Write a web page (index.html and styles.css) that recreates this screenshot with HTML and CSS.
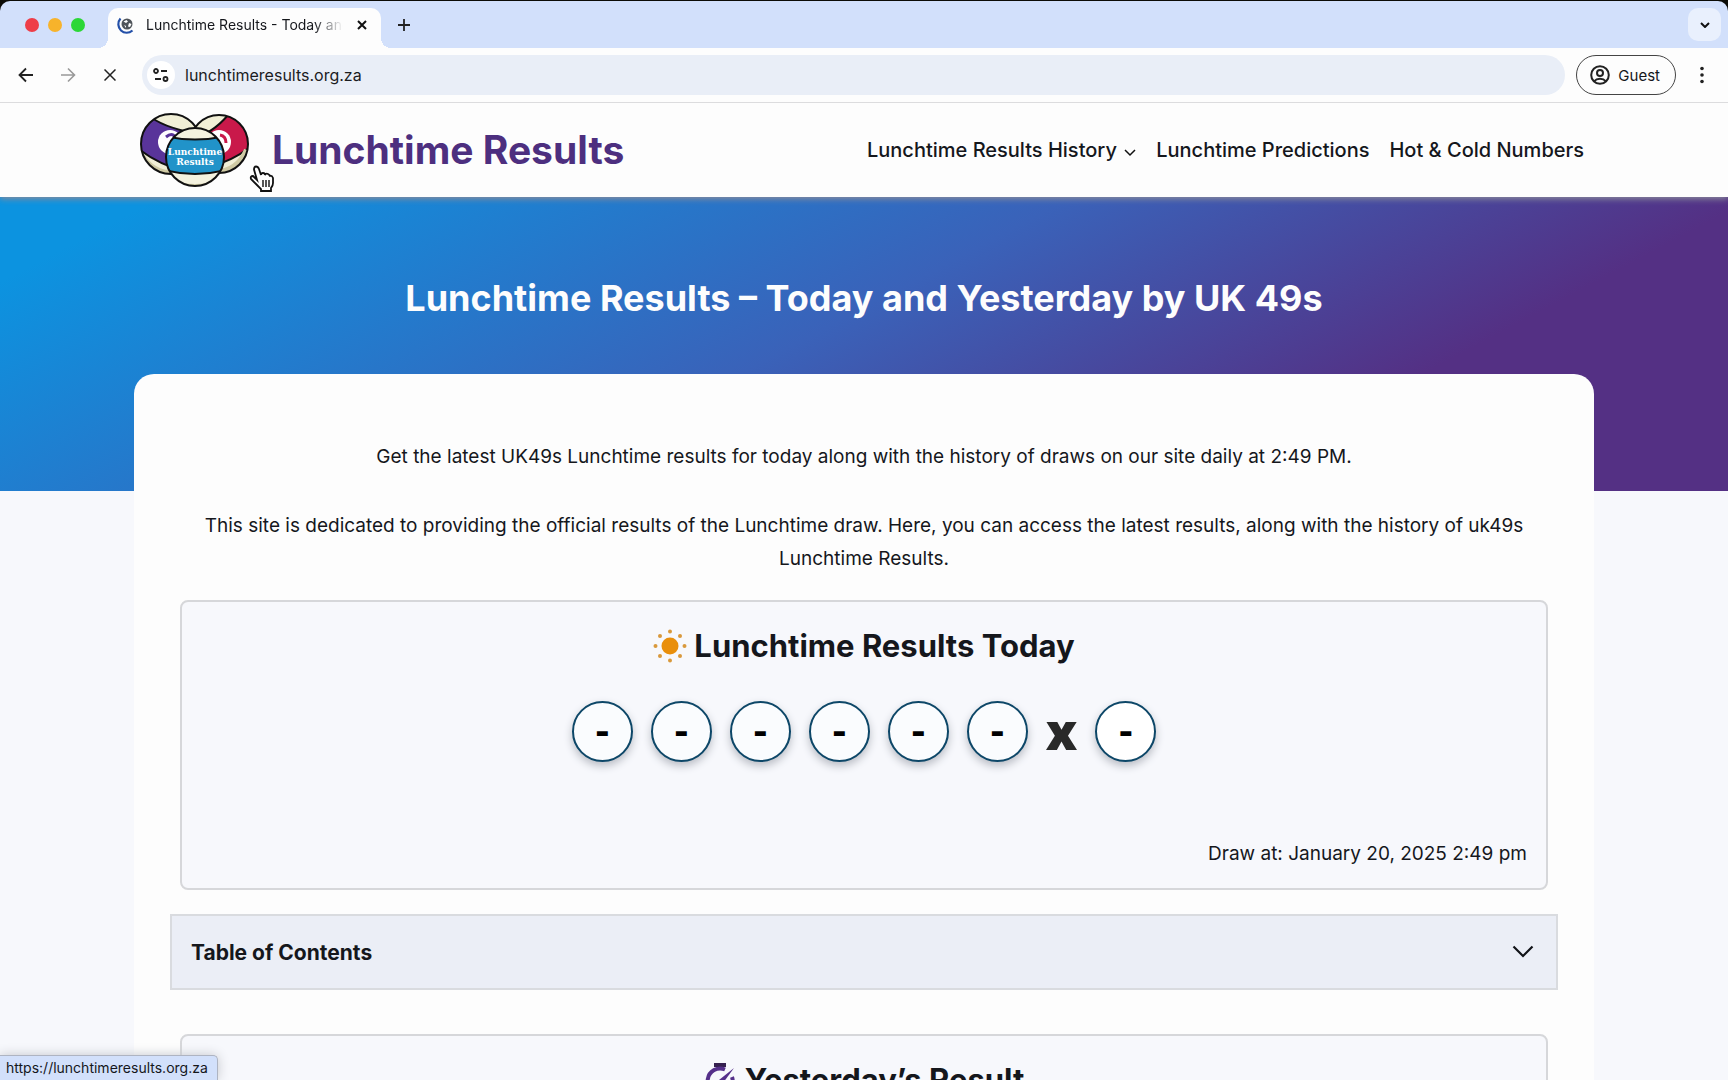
FILE: index.html
```html
<!DOCTYPE html>
<html lang="en">
<head>
<meta charset="utf-8">
<title>Lunchtime Results - Today and Yesterday</title>
<link rel="stylesheet" href="styles.css">
</head>
<body>
<div class="window">
  <div class="tabstrip">
    <div class="lights"><span class="light red"></span><span class="light amber"></span><span class="light green"></span></div>
    <div class="tab">
      <svg class="favicon" viewBox="0 0 18 18" width="18" height="18"><circle cx="10" cy="8" r="5.500" fill="#4f545a"/><path d="M6.500 5.500l3-1.500 1.500 1.500-2 1.500zM12 7l2.500 1-1.500 3-2-.5zM7 9l2 1 0 2z" fill="#fff"/><path d="M3.500 2.500C.3 6 .8 11.500 4 14.500s8 3 11.500 0" fill="none" stroke="#2450a8" stroke-width="2.200"/></svg>
      <span class="tab-title">Lunchtime Results - Today and</span>
      <button class="icon-btn" aria-label="Close tab"><svg viewBox="0 0 10 10" width="10" height="10"><path d="M1 1l8 8M9 1l-8 8" stroke="#111" stroke-width="2"/></svg></button>
    </div>
    <button class="icon-btn new-tab" aria-label="New tab"><svg viewBox="0 0 12 12" width="12" height="12"><path d="M6 0v12M0 6h12" stroke="#222" stroke-width="1.800"/></svg></button>
    <button class="icon-btn tab-search" aria-label="Search tabs"><svg viewBox="0 0 10 6" width="10" height="6"><path d="M1 1l4 4 4-4" fill="none" stroke="#111" stroke-width="2"/></svg></button>
  </div>
  <div class="toolbar">
    <button class="icon-btn nav-btn" aria-label="Back"><svg viewBox="0 0 16 16" width="16" height="16"><path d="M15 8H2M8 1.500L1.500 8 8 14.500" fill="none" stroke="#222" stroke-width="1.800"/></svg></button>
    <button class="icon-btn nav-btn" aria-label="Forward"><svg viewBox="0 0 16 16" width="16" height="16"><path d="M1 8h13M8 1.500L14.500 8 8 14.500" fill="none" stroke="#999" stroke-width="1.600"/></svg></button>
    <button class="icon-btn nav-btn" aria-label="Stop"><svg viewBox="0 0 12 12" width="12" height="12"><path d="M.5.5l11 11M11.500.5l-11 11" stroke="#222" stroke-width="1.500"/></svg></button>
    <div class="omnibox">
      <button class="icon-btn site-info" aria-label="Site information"><svg viewBox="0 0 16 14" width="16" height="14" fill="none" stroke="#222" stroke-width="1.800"><circle cx="3" cy="3" r="2"/><path d="M8 3h6M2 11h6"/><circle cx="12.500" cy="11" r="2"/></svg></button>
      <input class="url" type="text" aria-label="Address" value="lunchtimeresults.org.za">
    </div>
    <button class="guest"><svg viewBox="0 0 20 20" width="20" height="20" fill="none" stroke="#222" stroke-width="2"><circle cx="10" cy="10" r="8.800"/><circle cx="10" cy="8" r="3"/><path d="M4 16.300c3-3.300 9-3.300 12 0"/></svg>Guest</button>
    <button class="icon-btn menu" aria-label="Menu"><svg viewBox="0 0 4 18" width="4" height="18" fill="#222"><circle cx="2" cy="2.500" r="1.800"/><circle cx="2" cy="9" r="1.800"/><circle cx="2" cy="15.500" r="1.800"/></svg></button>
  </div>
  <div class="page">
    <header class="site-header">
      <a class="brand" href="#">
        <svg class="logo" viewBox="0 0 110 76" width="110" height="76">
          <defs><clipPath id="b1"><circle cx="31" cy="32" r="30"/></clipPath><clipPath id="b2"><circle cx="79" cy="32" r="29"/></clipPath><clipPath id="b3"><circle cx="55" cy="45" r="29"/></clipPath></defs>
          <g clip-path="url(#b1)"><path d="M0 0h62v64H0z" fill="#f1efd6"/><path d="M12 6Q28 17 60 22L46 60Q18 52 0 38L-6 20z" fill="#59349a" stroke="#111" stroke-width="2"/><path d="M2 44q12 20 38 17" fill="none" stroke="#cfcaa4" stroke-width="6"/></g>
          <circle cx="31" cy="32" r="30" fill="none" stroke="#111" stroke-width="2"/>
          <circle cx="30" cy="30" r="12" fill="#fff"/><path d="M26 25q6-5 9 0" fill="none" stroke="#59349a" stroke-width="3"/>
          <g clip-path="url(#b2)"><path d="M48 0h62v64H48z" fill="#f1efd6"/><path d="M52 26Q72 22 88 3L118 10V28Q100 46 72 54z" fill="#c9194a" stroke="#111" stroke-width="2"/><path d="M107 38q-10 22-31 22" fill="none" stroke="#cfcaa4" stroke-width="6"/></g>
          <circle cx="79" cy="32" r="29" fill="none" stroke="#111" stroke-width="2"/>
          <circle cx="79" cy="30" r="12" fill="#fff"/><path d="M80 23q6 1 6 8" fill="none" stroke="#c9194a" stroke-width="3"/>
          <g clip-path="url(#b3)"><path d="M25 14h60v62H25z" fill="#f4f2df"/><path d="M24 24q31 7 62 0v34q-31 8-62 0z" fill="#2193c9" stroke="#111" stroke-width="2"/><path d="M30 68q25 8 50 0v8H30z" fill="#cfcaa4"/></g>
          <circle cx="55" cy="45" r="29" fill="none" stroke="#111" stroke-width="2"/>
          <text x="55" y="43" class="logo-text">Lunchtime</text><text x="55" y="53" class="logo-text">Results</text>
        </svg>
        <span class="brand-name">Lunchtime Results</span>
      </a>
      <nav class="site-nav">
        <a href="#">Lunchtime Results History <svg viewBox="0 0 12 8" width="12" height="8"><path d="M1 1l5 5 5-5" fill="none" stroke="#111" stroke-width="1.500"/></svg></a>
        <a href="#">Lunchtime Predictions</a>
        <a href="#">Hot &amp; Cold Numbers</a>
      </nav>
    </header>
    <section class="hero"><h1>Lunchtime Results – Today and Yesterday by UK 49s</h1></section>
    <main class="content">
      <p class="intro">Get the latest UK49s Lunchtime results for today along with the history of draws on our site daily at 2:49 PM.</p>
      <p class="intro">This site is dedicated to providing the official results of the Lunchtime draw. Here, you can access the latest results, along with the history of uk49s Lunchtime Results.</p>
      <section class="result">
        <h2><svg viewBox="0 0 34 34" width="34" height="34" fill="#e98f0c"><circle cx="17" cy="17" r="8.500"/><g fill="#d9993c"><circle cx="17" cy="2.500" r="2"/><circle cx="17" cy="31.500" r="2"/><circle cx="2.500" cy="17" r="2"/><circle cx="31.500" cy="17" r="2"/><circle cx="7" cy="7" r="2"/><circle cx="27" cy="7" r="2"/><circle cx="7" cy="27" r="2"/><circle cx="27" cy="27" r="2"/></g></svg>Lunchtime Results Today</h2>
        <div class="balls"><span class="ball">-</span><span class="ball">-</span><span class="ball">-</span><span class="ball">-</span><span class="ball">-</span><span class="ball">-</span><span class="times">x</span><span class="ball bonus">-</span></div>
        <p class="draw">Draw at: January 20, 2025 2:49 pm</p>
      </section>
      <button class="toc">Table of Contents<svg viewBox="0 0 22 14" width="22" height="14"><path d="M1.500 1.500L11 11l9.500-9.500" fill="none" stroke="#111318" stroke-width="2.200"/></svg></button>
      <section class="result">
        <h2><svg viewBox="0 0 34 34" width="34" height="34"><path d="M10 0h12v4H10z" fill="#35204f"/><path d="M21 6.500A12.500 12.500 0 1 0 28 14" fill="none" stroke="#55308a" stroke-width="4"/><path d="M30 5L19 20l-4-3z" fill="#55308a"/></svg>Yesterday’s Result</h2>
      </section>
    </main>
  </div>
  <div class="status">https://lunchtimeresults.org.za</div>
  <svg class="cursor" viewBox="0 0 26 28" width="26" height="28"><path d="M8 15L5 4.500q0-3 2-3t3 2.500l2 6q0-2 2-2t2 2q1-2 3-1t1 2q3-1 4 2v5q0 3-2 5v3H12v-2l-5-5-5-5q-1-3 2-3z" fill="#fff" stroke="#111" stroke-width="1.800"/><path d="M14 15v7M17 15v7M20 15v7" stroke="#111" stroke-width="1.400"/></svg>
</div>
</body>
</html>
```
FILE: styles.css
```css
* { box-sizing: border-box; }
body { margin: 0; background: #0b0b06; font-family: Inter, "Liberation Sans", sans-serif; color: #15171c; }
button { border: 0; padding: 0; background: none; font: inherit; color: inherit; }
a { color: inherit; text-decoration: none; }
svg { flex: none; }
.window { position: relative; height: 100vh; overflow: hidden; display: flex; flex-direction: column; padding-top: 1px; }
.icon-btn { display: grid; place-items: center; flex: none; }

.tabstrip { display: flex; align-items: stretch; height: 47px; flex: none; background: #d2e0fb; border-radius: 10px 10px 0 0; }
.lights { display: flex; align-items: center; gap: 9px; width: 108px; padding-left: 25px; }
.light { width: 14px; height: 14px; border-radius: 50%; }
.red { background: #ee3d48; }
.amber { background: #f7b32b; }
.green { background: #2bd736; }
.tab { position: relative; display: flex; align-items: center; width: 273px; margin-top: 7px; padding: 0 14px 7px 9px; background: #fdfdfd; border-radius: 10px 10px 0 0; }
.tab::before, .tab::after { content: ""; position: absolute; bottom: 0; width: 10px; height: 10px; }
.tab::before { right: 100%; background: radial-gradient(circle at 0 0, transparent 10px, #fdfdfd 10px); }
.tab::after { left: 100%; background: radial-gradient(circle at 100% 0, transparent 10px, #fdfdfd 10px); }
.tab-title { flex: 1; margin: 0 14px 0 11px; font-size: 14px; line-height: 20px; white-space: nowrap; overflow: hidden; -webkit-mask-image: linear-gradient(90deg, #000 85%, transparent); mask-image: linear-gradient(90deg, #000 85%, transparent); }
.new-tab { width: 32px; height: 32px; margin: 8px 0 0 7px; }
.tab-search { width: 33px; height: 33px; margin: 7px 7px 0 auto; background: #e9f0fd; border-radius: 10px; }

.toolbar { display: flex; align-items: center; height: 55px; flex: none; padding: 0 11px 0 10px; background: #fdfdfd; border-bottom: 1px solid #dcdcde; }
.nav-btn { width: 32px; height: 32px; margin-right: 10px; }
.omnibox { display: flex; align-items: center; flex: 1; height: 40px; margin-left: 6px; padding-left: 5px; background: #e9eef7; border-radius: 20px; }
.site-info { width: 28px; height: 28px; background: #fff; border-radius: 50%; }
.url { flex: 1; min-width: 0; margin-left: 10px; padding: 0; border: 0; background: none; font: 16px/24px Inter, sans-serif; color: #1b1c1f; }
.guest { display: flex; align-items: center; gap: 8px; height: 40px; margin-left: 11px; padding: 0 15px 0 13px; border: 1px solid #444; border-radius: 20px; font-size: 15px; }
.menu { width: 30px; height: 32px; margin-left: 11px; }

.page { flex: 1; min-height: 0; overflow: hidden; background: #f7f8fc; }
.site-header { position: relative; display: flex; align-items: center; justify-content: space-between; height: 94px; padding: 0 144px 0 140px; background: #fdfdfd; box-shadow: 0 2px 6px #8a8a9a; }
.brand { display: flex; align-items: center; gap: 22px; color: #4d2f7f; }
.logo-text { font: bold 9px "DejaVu Serif", serif; fill: #fff; text-anchor: middle; }
.brand-name { font-size: 39px; font-weight: 700; line-height: 48px; }
.site-nav { display: flex; gap: 20px; font-size: 20px; font-weight: 500; white-space: nowrap; }
.site-nav svg { margin-left: 2px; }
.hero { height: 294px; padding-top: 76px; background: linear-gradient(152deg, #0c93e0 7%, #3a62b9 47%, #543084 77%); text-align: center; color: #fdfdfd; }
h1 { margin: 0; font-size: 36px; font-weight: 700; line-height: 50px; }
.content { position: relative; margin: -117px 134px 0; padding: 66px 36px 0; background: #fdfdfd; border-radius: 20px 20px 0 0; }
.intro { margin: 0 10px 36px; font-size: 19px; line-height: 33px; text-align: center; }
.intro + .intro { margin-bottom: 25px; }
.result { height: 290px; margin: 0 10px; padding: 20px 19px; background: #f7f8fc; border: 2px solid #d6d7da; border-radius: 8px; display: flex; flex-direction: column; }
h2 { display: flex; align-items: center; justify-content: center; gap: 7px; margin: 0; font-size: 31px; line-height: 48px; font-weight: 700; }
.balls { display: flex; justify-content: center; gap: 18px; margin-top: 31px; }
.ball { display: grid; place-items: center; width: 61px; height: 61px; border: 2px solid #0d4768; border-radius: 50%; background: #fafcfe; box-shadow: 0 4px 8px #b9bcc4; color: #000; font-size: 32px; font-weight: 900; }
.bonus { background: #fff; }
.times { font: 800 50px/61px "Open Sans", sans-serif; color: #292929; }
.draw { margin: auto 0 0; text-align: right; font-size: 19px; line-height: 28px; }
.toc { display: flex; align-items: center; justify-content: space-between; width: 100%; height: 76px; margin: 24px 0 44px; padding: 0 22px 0 19px; background: #ebeef6; border: 2px solid #d9dbdf; font-size: 21px; font-weight: 700; }
.status { position: absolute; left: 0; bottom: 0; height: 25px; padding: 0 9px 0 6px; background: #d2e0fb; border: 1px solid #aeb4c2; border-width: 1px 1px 0 0; border-radius: 0 5px 0 0; box-shadow: 0 0 12px #c4c6cc; font-size: 14px; line-height: 24px; }
.cursor { position: absolute; left: 249px; top: 165px; }
```
